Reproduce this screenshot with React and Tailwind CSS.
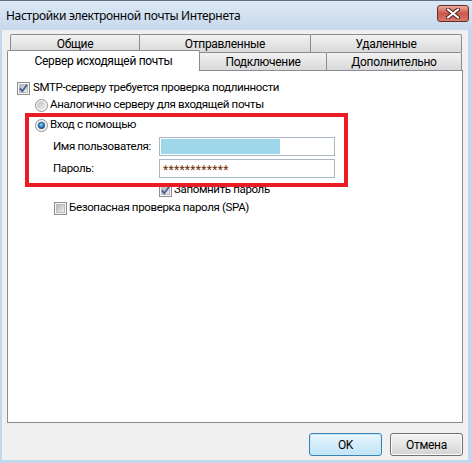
import React from "react";

function Check({ checked, id }) {
  return (
    <svg width="13" height="13" viewBox="0 0 13 13" className="shrink-0">
      <defs>
        <linearGradient id={id} x1="0" y1="0" x2="1" y2="1">
          <stop offset="0" stopColor="#aeb3b9" />
          <stop offset="1" stopColor="#f2f2f3" />
        </linearGradient>
      </defs>
      <rect x="0.5" y="0.5" width="12" height="12" fill="#f6f6f6" stroke="#8e8f8f" />
      <rect x="2.5" y="2.5" width="8" height="8" fill={`url(#${id})`} stroke="#b9bcc0" />
      {checked && (
        <path d="M3 6.3 L5.3 9.2 L10 2.8" fill="none" stroke="#4a5f97" strokeWidth="1.9" />
      )}
    </svg>
  );
}

function Radio({ checked, id }) {
  return (
    <svg width="13" height="13" viewBox="0 0 13 13" className="shrink-0">
      <defs>
        <linearGradient id={id + "a"} x1="0" y1="0" x2="1" y2="1">
          <stop offset="0" stopColor="#b8bcc2" />
          <stop offset="1" stopColor="#f4f4f5" />
        </linearGradient>
        <radialGradient id={id + "b"} cx="0.45" cy="0.4" r="0.6">
          <stop offset="0" stopColor="#a8e6ff" />
          <stop offset="0.5" stopColor="#2c8bd0" />
          <stop offset="1" stopColor="#164a77" />
        </radialGradient>
      </defs>
      <circle cx="6.5" cy="6.5" r="6" fill="#f6f6f6" stroke="#8e8f8f" />
      <circle cx="6.5" cy="6.5" r="4.3" fill={`url(#${id}a)`} />
      {checked && <circle cx="6.5" cy="6.5" r="3.2" fill={`url(#${id}b)`} stroke="#1f4f79" strokeWidth="0.6" />}
    </svg>
  );
}

const inactiveTab =
  "flex items-center justify-center border-l border-t border-r border-[#898c95] rounded-t-[2px] bg-linear-to-b from-[#f2f2f2] to-[#d9d9d9] text-black whitespace-nowrap";

export default function App() {
  return (
    <div className="w-[472px] h-[463px] flex flex-col bg-[#c3d6ec] border-t border-[#5f7184] overflow-hidden font-['Roboto',sans-serif] text-[12px] text-black leading-none whitespace-nowrap">
      {/* Title bar */}
      <div className="h-[29px] flex justify-between pl-[6px] pr-[3px] bg-linear-to-b from-[#dce8f4] to-[#c8d9ed]">
        <span className="self-center mt-[1px] font-['Noto_Sans',sans-serif] tracking-[-0.3px]">Настройки электронной почты Интернета</span>
        <div className="mt-[4px] w-[32px] h-[17px] rounded-[3px] border border-[#6d2b25] bg-linear-to-b from-[#e9a99d] via-[#c9574a] to-[#d67a6d] flex items-center justify-center">
          <svg width="14" height="11" viewBox="0 0 14 11">
            <path d="M2 1.5 L12 9.5 M12 1.5 L2 9.5" stroke="#4a1f1a" strokeWidth="4" strokeLinecap="round" />
            <path d="M2 1.5 L12 9.5 M12 1.5 L2 9.5" stroke="#ffffff" strokeWidth="2.2" strokeLinecap="round" />
          </svg>
        </div>
      </div>

      {/* Content */}
      <div className="flex-1 ml-[2px] mr-[4px] mb-[3px] bg-[#f0f0f0] pt-[4px] px-[5px] flex flex-col tracking-[-0.3px]">
        {/* Tab row 1 */}
        <div className="flex ml-[3px] h-[18px]">
          <div className={inactiveTab + " w-[130px]"}>Общие</div>
          <div className={inactiveTab + " w-[172px] -ml-px"}>Отправленные</div>
          <div className={inactiveTab + " w-[152px] -ml-px"}>Удаленные</div>
        </div>
        {/* Tab row 2 */}
        <div className="flex items-end h-[18px]">
          <div className="relative z-10 w-[193px] h-[21px] -mb-px bg-white border-l border-t border-r border-[#898c95] rounded-t-[2px] flex items-center justify-center pb-[1px]">
            Сервер исходящей почты
          </div>
          <div className={inactiveTab + " w-[128px] h-[18px] -ml-px pt-[1px]"}>Подключение</div>
          <div className={inactiveTab + " w-[136px] h-[18px] -ml-px pt-[1px]"}>Дополнительно</div>
        </div>

        {/* Panel */}
        <div className="relative h-[353px] border border-[#898c95] bg-white flex flex-col pl-[9px] pt-[9px] text-[11.5px] tracking-[-0.35px]">
          <div className="flex items-center h-[16px] gap-[3px]">
            <Check checked id="c1" />
            <span>SMTP-серверу требуется проверка подлинности</span>
          </div>
          <div className="flex items-center h-[16px] gap-[2px] ml-[18px] mt-[1px]">
            <Radio id="r1" />
            <span>Аналогично серверу для входящей почты</span>
          </div>
          <div className="flex items-center h-[16px] gap-[2px] ml-[18px] mt-[4px]">
            <Radio checked id="r2" />
            <span>Вход с помощью</span>
          </div>
          <div className="flex items-center h-[19px] mt-[4px]">
            <span className="ml-[36px] w-[106px]">Имя пользователя:</span>
            <div className="w-[176px] h-[19px] border border-[#abb7c6] bg-white p-[1px]">
              <div className="w-[119px] h-full bg-[#9dd7e9]" />
            </div>
          </div>
          <div className="flex items-center h-[19px] mt-[3px]">
            <span className="ml-[36px] w-[106px]">Пароль:</span>
            <div className="w-[176px] h-[19px] border border-[#abb7c6] bg-white pl-[3px] pt-[3px] flex items-center text-[#6e2d05] text-[12px] tracking-[0.3px]">
              ************
            </div>
          </div>
          <div className="flex items-center h-[16px] gap-[2px] ml-[142px] mt-[4px]">
            <Check checked id="c2" />
            <span>Запомнить пароль</span>
          </div>
          <div className="flex items-center h-[16px] gap-[2px] ml-[37px] mt-[2px]">
            <Check id="c3" />
            <span>Безопасная проверка пароля (SPA)</span>
          </div>

          {/* Red annotation box */}
          <div className="absolute left-[17px] top-[42px] w-[323px] h-[74px] border-4 border-[#ec1c24]" />
        </div>

        {/* Buttons */}
        <div className="flex justify-end gap-[8px] mt-[10px]">
          <button className="w-[73px] h-[23px] rounded-[3px] border border-[#3c7fb1] bg-linear-to-b from-[#eaf6fd] to-[#bfe3f7] text-black shadow-[inset_0_0_0_1px_#c5e8fb]">
            OK
          </button>
          <button className="w-[73px] h-[23px] rounded-[3px] border border-[#707070] bg-linear-to-b from-[#f3f3f3] via-[#e6e6e6] to-[#d2d2d2] text-black shadow-[inset_0_0_0_1px_#fbfbfb]">
            Отмена
          </button>
        </div>
      </div>
    </div>
  );
}
